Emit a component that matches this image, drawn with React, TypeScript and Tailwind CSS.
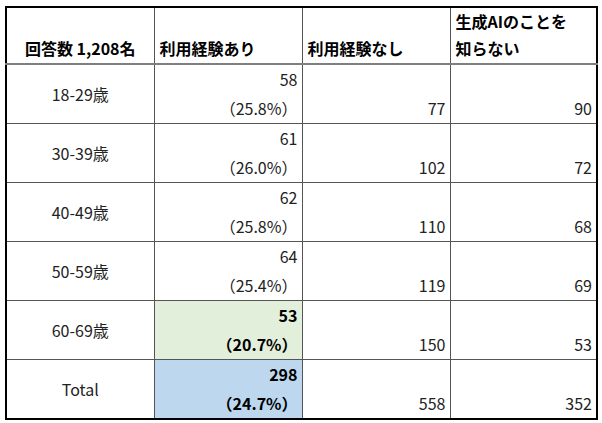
import React from 'react';

type Row = {
  label: string;
  used: number;
  pct: string;
  notUsed: number;
  unknown: number;
  tone?: 'green' | 'blue';
};

const rows: Row[] = [
  { label: '18-29歳', used: 58, pct: '25.8%', notUsed: 77, unknown: 90 },
  { label: '30-39歳', used: 61, pct: '26.0%', notUsed: 102, unknown: 72 },
  { label: '40-49歳', used: 62, pct: '25.8%', notUsed: 110, unknown: 68 },
  { label: '50-59歳', used: 64, pct: '25.4%', notUsed: 119, unknown: 69 },
  { label: '60-69歳', used: 53, pct: '20.7%', notUsed: 150, unknown: 53, tone: 'green' },
  { label: 'Total', used: 298, pct: '24.7%', notUsed: 558, unknown: 352, tone: 'blue' },
];

const Line = ({ children }: { children: React.ReactNode }) => (
  <div className="h-[29px] leading-[29px] whitespace-nowrap">{children}</div>
);

const HeadLine = ({ children }: { children: React.ReactNode }) => (
  <div className="h-[27px] leading-[27px] whitespace-nowrap">{children}</div>
);

const App: React.FC = () => {
  return (
    <div
      className="w-[602px] h-[423px] bg-white pl-[5px] pt-[6px]"
      style={{ fontFamily: '"Noto Sans CJK JP", "Noto Sans", sans-serif' }}
    >
      <table className="border-collapse border-2 border-black table-fixed w-[591px] text-[16px] text-[#222]">
        <colgroup>
          <col className="w-[148px]" />
          <col className="w-[148px]" />
          <col className="w-[148px]" />
          <col className="w-[147px]" />
        </colgroup>
        <thead>
          <tr className="h-[55px] border-b-2 border-b-[#7f7f7f]">
            <th className="p-0 pb-[1px] border-r border-[#555] align-bottom text-center font-bold text-black">
              <HeadLine>回答数 1,208名</HeadLine>
            </th>
            <th className="p-0 pb-[1px] border-r border-[#555] align-bottom text-left font-bold pl-[5px] text-black">
              <HeadLine>利用経験あり</HeadLine>
            </th>
            <th className="p-0 pb-[1px] border-r border-[#555] align-bottom text-left font-bold pl-[5px] text-black">
              <HeadLine>利用経験なし</HeadLine>
            </th>
            <th className="p-0 pb-[1px] align-bottom text-left font-bold pl-[5px] text-black">
              <HeadLine>生成AIのことを</HeadLine>
              <HeadLine>知らない</HeadLine>
            </th>
          </tr>
        </thead>
        <tbody>
          {rows.map((r, i) => (
            <tr key={i} className="h-[58px] border-b border-[#555]">
              <td className="p-0 border-r border-[#555] text-center align-middle">{r.label}</td>
              <td
                className={
                  'p-0 border-r border-[#555] text-right align-top pr-[4px] ' +
                  (r.tone === 'green' ? 'bg-[#e2efda] font-bold text-black' : r.tone === 'blue' ? 'bg-[#bdd7ee] font-bold text-black' : '')
                }
              >
                <Line>{r.used}</Line>
                <Line>（{r.pct}）</Line>
              </td>
              <td className="p-0 border-r border-[#555] text-right align-bottom pr-[4px]">
                <Line>{r.notUsed}</Line>
              </td>
              <td className="p-0 text-right align-bottom pr-[4px]">
                <Line>{r.unknown}</Line>
              </td>
            </tr>
          ))}
        </tbody>
      </table>
    </div>
  );
};

export default App;
